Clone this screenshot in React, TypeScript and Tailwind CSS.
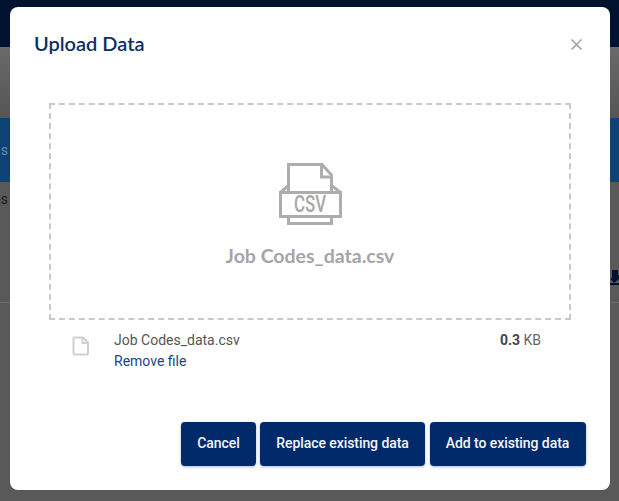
const FILE_NAME = "Job Codes_data.csv";

const CsvIcon = () => (
    <svg width="64" height="66" viewBox="0 0 64 66" fill="none" className="block">
        <g stroke="#adadad" strokeWidth="3" strokeLinejoin="miter">
            <path d="M10.5 30 V2.5 H44 L53.5 13 V30"/>
            <path d="M43.5 2.5 V15 H53.5"/>
            <path d="M2.5 30.5 H62.5 V54.5 H2.5 Z"/>
            <path d="M2.5 30.5 L10.5 23.5 M62.5 30.5 L53.5 23.5"/>
            <path d="M10.5 54.5 V61.5 H53.5 V54.5"/>
        </g>
        <text x="32" y="50" textAnchor="middle" fill="#a8a8a8" fontFamily="'Roboto', sans-serif" fontSize="23" fontWeight="500" textLength="32" lengthAdjust="spacingAndGlyphs">CSV</text>
    </svg>
);

const SmallFileIcon = () => (
    <svg width="18" height="20" viewBox="0 0 18 20" fill="none" className="block">
        <path d="M2 1.5 H11 L16 6.5 V17 Q16 18.5 14.5 18.5 H3 Q1.5 18.5 1.5 17 V2 Z" stroke="#cfcfcf" strokeWidth="2" strokeLinejoin="round"/>
        <path d="M10.5 2 V7 H15.5" stroke="#cfcfcf" strokeWidth="2"/>
    </svg>
);

const ActionButton = ({label, className}: { label: string, className: string }) => (
    <button className={`h-[44px] pb-[2px] rounded-[4px] bg-[#012a6a] text-[#f2f5fa] text-[14px] font-medium tracking-[-0.07px] shadow-[0_1px_3px_rgba(0,60,160,0.35)] font-['Roboto',sans-serif] ${className}`}>
        {label}
    </button>
);

const App = () => {
    return (
        <div className="relative w-[619px] h-[501px] overflow-hidden bg-[#595959]">
            {/* dimmed page behind the dialog */}
            <div className="h-[47px] bg-[#00122f]"/>
            <div className="h-[71px] bg-gradient-to-b from-[#6a6a6a] to-[#555555]"/>
            <div className="h-[64px] bg-[#0e4274] flex items-center">
                <div className="w-[8px] flex justify-end overflow-hidden">
                    <span className="text-[#6f8aa8] text-[14px] font-['Roboto',sans-serif]">s</span>
                </div>
            </div>
            <div className="h-[121px] border-b border-[#6e6e6e] flex flex-col">
                <div className="h-[34px] w-[8px] flex items-center justify-end overflow-hidden">
                    <span className="text-[#1e1e1e] text-[14px] font-['Roboto',sans-serif]">es</span>
                </div>
                <div className="mt-[54px] ml-[610px] w-[9px] h-[15px] border-b-2 border-[#00122f] flex justify-start">
                    <svg width="9" height="13" viewBox="0 0 9 13" className="block">
                        <path d="M2 0 H8 V5 H9 V9 L4 13 L0 8.5 H2 Z" fill="#00122f"/>
                    </svg>
                </div>
            </div>

            <div className="absolute left-[10px] top-[7px] w-[600px] h-[483px] rounded-[8px] bg-white flex flex-col">
                <div className="flex items-center justify-between pl-[24px] pr-[27px] pt-[24px]">
                    <h2 className="mb-[2px] text-[#0c2f66] text-[20px] leading-[24px] font-semibold font-['Lato',sans-serif]">Upload Data</h2>
                    <svg width="13" height="13" viewBox="0 0 13 13" className="mt-[1px] block">
                        <path d="M1.5 1.5 L11.5 11.5 M11.5 1.5 L1.5 11.5" stroke="#a0a0a0" strokeWidth="1.5"/>
                    </svg>
                </div>

                <div className="mt-[46px] mx-[39px] h-[217px] border-2 border-dashed border-[#c9c9c9] flex flex-col items-center pt-[57px]">
                    <CsvIcon/>
                    <p className="mt-[15px] text-[#a5a5a5] text-[19.5px] leading-[26px] font-bold font-['Lato',sans-serif]">{FILE_NAME}</p>
                </div>

                <div className="mt-[10px] pl-[62px] pr-[69px] flex items-start">
                    <div className="mt-[6px] mr-[24px]">
                        <SmallFileIcon/>
                    </div>
                    <div className="flex-1 font-['Roboto',sans-serif] text-[14px] leading-[21px]">
                        <p className="text-[#555555]">{FILE_NAME}</p>
                        <a className="text-[#1b467f]">Remove file</a>
                    </div>
                    <p className="font-['Roboto',sans-serif] text-[14px] leading-[21px] text-[#666666]">
                        <span className="font-bold text-[#444444]">0.3</span> KB
                    </p>
                </div>

                <div className="mt-auto mb-[24px] pr-[24px] flex justify-end gap-[4px]">
                    <ActionButton label="Cancel" className="w-[75px]"/>
                    <ActionButton label="Replace existing data" className="w-[165px]"/>
                    <ActionButton label="Add to existing data" className="w-[156px] ml-[1px] pr-[1px]"/>
                </div>
            </div>
        </div>
    );
}

export default App;
